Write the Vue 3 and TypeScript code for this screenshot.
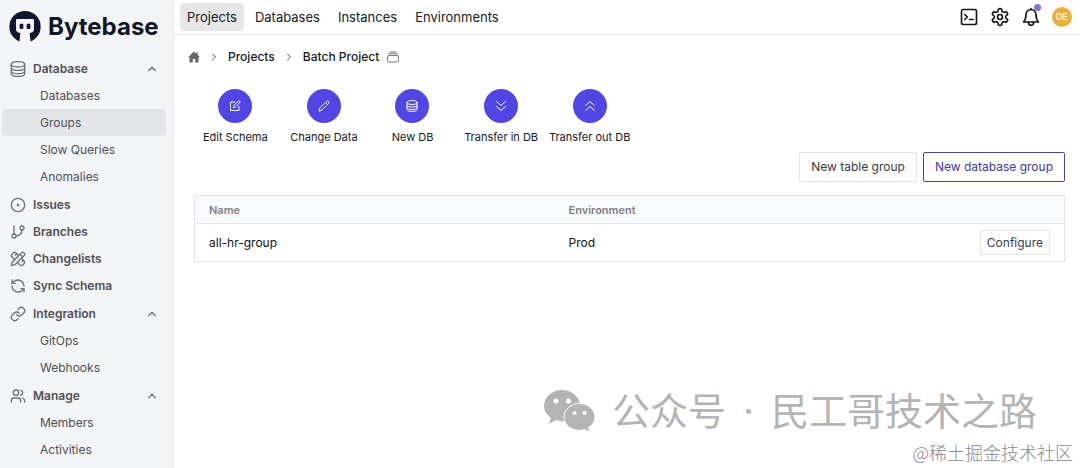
<script setup lang="ts">
type Glyph = { paths: string[]; circles?: number[][]; ellipses?: number[][]; rects?: number[][] }

const glyphs: Record<string, Glyph> = {
  database: {
    ellipses: [[12, 5, 9, 3]],
    paths: ['M3 5v14a9 3 0 0 0 18 0V5', 'M3 12a9 3 0 0 0 18 0'],
  },
  storage: {
    ellipses: [[12, 5, 10, 4]],
    paths: ['M2 5v14a10 4 0 0 0 20 0V5', 'M2 10a10 4 0 0 0 20 0', 'M2 15a10 4 0 0 0 20 0'],
  },
  issues: { paths: [], circles: [[12, 12, 10], [12, 12, 1]] },
  branches: {
    circles: [[18, 6, 3], [6, 18, 3]],
    paths: ['M6 3v12', 'M18 9a9 9 0 0 1-9 9'],
  },
  changelists: {
    paths: [
      'm15 5 4 4',
      'M13 7 8.7 2.7a2.41 2.41 0 0 0-3.4 0L2.7 5.3a2.41 2.41 0 0 0 0 3.4L7 13',
      'm8 6 2-2',
      'm2 22 5.5-1.5L21.17 6.83a2.82 2.82 0 0 0-4-4L3.5 16.5Z',
      'm18 16 2-2',
      'm17 11 4.3 4.3c.94.94.94 2.46 0 3.4l-2.6 2.6c-.94.94-2.46.94-3.4 0L11 17',
    ],
  },
  sync: {
    paths: [
      'M21 12a9 9 0 0 0-9-9 9.75 9.75 0 0 0-6.74 2.74L3 8',
      'M3 3v5h5',
      'M3 12a9 9 0 0 0 9 9 9.75 9.75 0 0 0 6.74-2.74L21 16',
      'M16 16h5v5',
    ],
  },
  link: {
    paths: [
      'M10 13a5 5 0 0 0 7.54.54l3-3a5 5 0 0 0-7.07-7.07l-1.72 1.71',
      'M14 11a5 5 0 0 0-7.54-.54l-3 3a5 5 0 0 0 7.07 7.07l1.71-1.71',
    ],
  },
  users: {
    circles: [[9, 7, 4]],
    paths: ['M16 21v-2a4 4 0 0 0-4-4H6a4 4 0 0 0-4 4v2', 'M22 21v-2a4 4 0 0 0-3-3.87', 'M16 3.13a4 4 0 0 1 0 7.75'],
  },
  edit: {
    paths: ['M11 4H3v17h17v-8', 'M18.4 2.6a2 2 0 0 1 3 3L12.5 14.5 8.5 15.5l1-4Z'],
  },
  pencil: {
    paths: ['M17 3a2.85 2.83 0 1 1 4 4L7.5 20.5 2 22l1.5-5.5Z', 'm15 5 4 4'],
  },
  down: { paths: ['m3 3 9 8 9-8', 'm3 13 9 8 9-8'] },
  up: { paths: ['m3 11 9-8 9 8', 'm3 21 9-8 9 8'] },
  terminal: { rects: [[3, 3, 18, 18]], paths: ['m7 9 3 3-3 3', 'M12.500 15h4.500'] },
  settings: {
    circles: [[12, 12, 3]],
    paths: [
      'M12.22 2h-.44a2 2 0 0 0-2 2v.18a2 2 0 0 1-1 1.730l-.43.25a2 2 0 0 1-2 0l-.15-.08a2 2 0 0 0-2.730.73l-.22.38a2 2 0 0 0 .73 2.730l.15.1a2 2 0 0 1 1 1.720v.51a2 2 0 0 1-1 1.740l-.15.09a2 2 0 0 0-.73 2.730l.22.38a2 2 0 0 0 2.730.73l.15-.08a2 2 0 0 1 2 0l.43.25a2 2 0 0 1 1 1.730V20a2 2 0 0 0 2 2h.44a2 2 0 0 0 2-2v-.18a2 2 0 0 1 1-1.730l.43-.25a2 2 0 0 1 2 0l.15.08a2 2 0 0 0 2.730-.73l.22-.39a2 2 0 0 0-.73-2.730l-.15-.08a2 2 0 0 1-1-1.740v-.5a2 2 0 0 1 1-1.740l.15-.09a2 2 0 0 0 .73-2.730l-.22-.38a2 2 0 0 0-2.730-.73l-.15.08a2 2 0 0 1-2 0l-.43-.25a2 2 0 0 1-1-1.730V4a2 2 0 0 0-2-2z',
    ],
  },
  bell: {
    paths: ['M6 9a6 6 0 0 1 12 0c0 5 1 7 3 9H3c2-2 3-4 3-9', 'M9 18v1a3 3 0 0 0 6 0v-1', 'M12 3V2'],
  },
}

interface NavItem {
  label: string
  icon: string
  children?: string[]
}

const sections: NavItem[][] = [
  [{ label: 'Database', icon: 'storage', children: ['Databases', 'Groups', 'Slow Queries', 'Anomalies'] }],
  [
    { label: 'Issues', icon: 'issues' },
    { label: 'Branches', icon: 'branches' },
    { label: 'Changelists', icon: 'changelists' },
    { label: 'Sync Schema', icon: 'sync' },
  ],
  [{ label: 'Integration', icon: 'link', children: ['GitOps', 'Webhooks'] }],
  [{ label: 'Manage', icon: 'users', children: ['Members', 'Activities'] }],
]
const activeChild = 'Groups'

const tabs = ['Projects', 'Databases', 'Instances', 'Environments']
const activeTab = 'Projects'

const tools = [
  { label: 'SQL Editor', icon: 'terminal' },
  { label: 'Settings', icon: 'settings' },
  { label: 'Notifications', icon: 'bell' },
]

const actions = [
  { label: 'Edit Schema', icon: 'edit' },
  { label: 'Change Data', icon: 'pencil' },
  { label: 'New DB', icon: 'storage' },
  { label: 'Transfer in DB', icon: 'down' },
  { label: 'Transfer out DB', icon: 'up' },
]

const groups = [{ name: 'all-hr-group', environment: 'Prod' }]
</script>

<template>
  <div class="layout">
    <aside class="sidebar">
      <a class="logo" href="#">
        <svg class="logo-mark" viewBox="0 0 96 96" aria-hidden="true">
          <circle cx="48" cy="47" r="47" fill="#10172a" />
          <path
            d="M21 27q0-3 3-3h48q3 0 3 3v27q0 9-9 11l-4 1 3 30H31l3-30-4-1q-9-2-9-11Z"
            fill="#f3f4f6"
          />
          <rect x="32" y="38" width="11" height="16" rx="3" fill="#10172a" />
          <rect x="53" y="38" width="11" height="16" rx="3" fill="#10172a" />
        </svg>
        <span>Bytebase</span>
      </a>
      <nav class="menu" aria-label="Project">
        <div v-for="(section, i) in sections" :key="i">
          <template v-for="item in section" :key="item.label">
            <component
              :is="item.children ? 'button' : 'a'"
              class="row"
              :href="item.children ? undefined : '#'"
              :type="item.children ? 'button' : undefined"
            >
              <svg class="icon row-icon" viewBox="0 0 24 24" aria-hidden="true">
                <ellipse v-for="(e, k) in glyphs[item.icon].ellipses" :key="k" :cx="e[0]" :cy="e[1]" :rx="e[2]" :ry="e[3]" />
                <circle v-for="(c, k) in glyphs[item.icon].circles" :key="k" :cx="c[0]" :cy="c[1]" :r="c[2]" />
                <path v-for="d in glyphs[item.icon].paths" :key="d" :d="d" />
              </svg>
              <span>{{ item.label }}</span>
              <svg v-if="item.children" class="icon caret" viewBox="0 0 24 24" aria-hidden="true">
                <path d="m18 15-6-6-6 6" />
              </svg>
            </component>
            <a
              v-for="child in item.children"
              :key="child"
              href="#"
              class="row child"
              :class="{ active: child === activeChild }"
              >{{ child }}</a
            >
          </template>
        </div>
      </nav>
    </aside>

    <div class="content">
      <header class="topbar">
        <nav class="tabs" aria-label="Main">
          <a v-for="tab in tabs" :key="tab" href="#" class="tab" :class="{ active: tab === activeTab }">{{ tab }}</a>
        </nav>
        <div class="tools">
          <button v-for="tool in tools" :key="tool.label" type="button" class="tool" :aria-label="tool.label">
            <svg class="icon tool-icon" viewBox="0 0 24 24" aria-hidden="true">
              <rect v-for="(r, k) in glyphs[tool.icon].rects" :key="k" :x="r[0]" :y="r[1]" :width="r[2]" :height="r[3]" rx="2" />
              <circle v-for="(c, k) in glyphs[tool.icon].circles" :key="k" :cx="c[0]" :cy="c[1]" :r="c[2]" />
              <path v-for="d in glyphs[tool.icon].paths" :key="d" :d="d" />
            </svg>
            <span v-if="tool.icon === 'bell'" class="dot"></span>
          </button>
          <button type="button" class="avatar">DE</button>
        </div>
      </header>

      <nav class="crumbs" aria-label="Breadcrumb">
        <a href="#" aria-label="Home">
          <svg class="home" viewBox="0 0 24 24" aria-hidden="true">
            <path d="M12 1 0 12.500h3V23h6.500v-7h5v7H21V12.500h3L19.500 8.200V3h-3v2.300Z" />
          </svg>
        </a>
        <svg class="icon crumb-sep" viewBox="0 0 24 24" aria-hidden="true"><path d="m9 18 6-6-6-6" /></svg>
        <a href="#">Projects</a>
        <svg class="icon crumb-sep" viewBox="0 0 24 24" aria-hidden="true"><path d="m9 18 6-6-6-6" /></svg>
        <a href="#">Batch Project</a>
        <svg class="icon batch" viewBox="0 0 24 24" aria-hidden="true">
          <rect x="1" y="9" width="22" height="13" rx="3" />
          <path d="M3 5.500h18M6 2h12" />
        </svg>
      </nav>

      <main class="main">
        <div class="actions">
          <button v-for="action in actions" :key="action.label" type="button" class="action">
            <span class="disc">
              <svg class="icon disc-icon" viewBox="0 0 24 24" aria-hidden="true">
                <ellipse v-for="(e, k) in glyphs[action.icon].ellipses" :key="k" :cx="e[0]" :cy="e[1]" :rx="e[2]" :ry="e[3]" />
                <path v-for="d in glyphs[action.icon].paths" :key="d" :d="d" />
              </svg>
            </span>
            <span>{{ action.label }}</span>
          </button>
        </div>

        <div class="buttons">
          <button type="button" class="btn">New table group</button>
          <button type="button" class="btn primary">New database group</button>
        </div>

        <table class="grid">
          <thead>
            <tr>
              <th class="col-name">Name</th>
              <th>Environment</th>
              <th aria-label="Actions"></th>
            </tr>
          </thead>
          <tbody>
            <tr v-for="group in groups" :key="group.name">
              <td>{{ group.name }}</td>
              <td>{{ group.environment }}</td>
              <td class="cell-action"><button type="button" class="btn small">Configure</button></td>
            </tr>
          </tbody>
        </table>
      </main>
    </div>

    <div class="mark">
      <svg class="wechat" viewBox="0 0 51 42" aria-hidden="true">
        <path
          d="M18 0C8 0 0 7 0 16c0 5 3 9 7 12l-2 6 7-4 6 1.500C28 31 36 25 36 16S28 0 18 0Z"
        />
        <path
          class="front"
          d="M35.500 13.500C27 13.500 20 19.500 20 27s7 13.500 15.500 13.500l5-1 5.500 3-1.500-5C48.500 35 51 31.500 51 27c0-7.500-7-13.500-15.500-13.500Z"
        />
        <g class="eyes">
          <circle cx="12" cy="11" r="2.500" />
          <circle cx="24.500" cy="11" r="2.500" />
          <circle cx="30.500" cy="23" r="2" />
          <circle cx="40.500" cy="23" r="2" />
        </g>
      </svg>
      <span>公众号</span>
      <span>·</span>
      <span>民工哥技术之路</span>
    </div>
    <div class="credit">@稀土掘金技术社区</div>
  </div>
</template>

<style>
body {
  margin: 0;
  background: #fff;
}
</style>

<style scoped>
.layout {
  position: relative;
  display: flex;
  min-height: 100vh;
  overflow: hidden;
  box-sizing: border-box;
  font-family: Inter, 'Noto Sans CJK SC', sans-serif;
  font-size: 12px;
  line-height: 16px;
  color: #18181b;
}
a {
  color: inherit;
  text-decoration: none;
}
button {
  margin: 0;
  padding: 0;
  border: 0;
  background: none;
  color: inherit;
  font: inherit;
  cursor: pointer;
}
.icon {
  flex: none;
  fill: none;
  stroke: currentColor;
  stroke-width: 2;
  stroke-linecap: round;
  stroke-linejoin: round;
}

.sidebar {
  flex: none;
  box-sizing: border-box;
  width: 174px;
  border-right: 1px solid #e8eaed;
  background: #f3f4f6;
  color: #505056;
}
.logo {
  display: flex;
  align-items: center;
  gap: 7px;
  height: 55px;
  box-sizing: border-box;
  padding: 0 0 2px 9px;
  color: #10172a;
  font-size: 24px;
  font-weight: 700;
  line-height: 32px;
}
.logo-mark {
  flex: none;
  width: 32px;
  height: 32px;
}
.menu {
  display: flex;
  flex-direction: column;
  gap: 1px;
  padding: 0 7px 0 2px;
}
.row {
  display: flex;
  align-items: center;
  gap: 7px;
  width: 100%;
  height: 27px;
  box-sizing: border-box;
  padding: 0 7px 0 8px;
  border-radius: 4px;
  font-weight: 600;
  text-align: left;
}
.child {
  padding-left: 38px;
  font-weight: 400;
}
.child.active {
  background: #e4e5e8;
}
.row-icon {
  width: 16px;
  height: 16px;
  color: #707078;
}
.caret {
  width: 14px;
  height: 14px;
  margin-left: auto;
  color: #707078;
}

.content {
  flex: 1;
  min-width: 0;
}
.topbar {
  display: flex;
  align-items: center;
  justify-content: space-between;
  height: 35px;
  box-sizing: border-box;
  padding: 0 8px 0 6px;
  border-bottom: 1px solid #e5e7eb;
}
.tabs {
  display: flex;
  gap: 4px;
}
.tab {
  padding: 4px 7px;
  border-radius: 4px;
  font-size: 13px;
  line-height: 20px;
}
.tab.active {
  background: #e5e6e8;
}
.tools {
  display: flex;
  align-items: center;
  gap: 11px;
}
.tool {
  position: relative;
  display: flex;
}
.tool-icon {
  width: 20px;
  height: 20px;
}
.dot {
  position: absolute;
  top: -3px;
  right: 0;
  width: 7px;
  height: 7px;
  border-radius: 50%;
  background: #8272dc;
}
.avatar {
  width: 20px;
  height: 20px;
  border-radius: 50%;
  background: #e8b13c;
  color: #fff6dc;
  font-size: 9px;
  line-height: 20px;
  font-weight: 600;
}

.crumbs {
  display: flex;
  align-items: center;
  gap: 8px;
  padding: 14px 14px 0;
  font-weight: 500;
}
.crumbs a {
  display: flex;
}
.home {
  width: 12px;
  height: 12px;
  fill: #66666a;
}
.crumb-sep {
  width: 12px;
  height: 12px;
  color: #55555a;
}
.batch {
  width: 12px;
  height: 12px;
  color: #77777c;
}

.main {
  padding: 24px 15px 0 20px;
}
.actions {
  display: grid;
  grid-template-columns: repeat(5, 1fr);
  max-width: 443px;
  margin-left: -3px;
}
.action {
  display: flex;
  flex-direction: column;
  align-items: center;
  gap: 6px;
  font-size: 11px;
  white-space: nowrap;
}
.disc {
  display: flex;
  align-items: center;
  justify-content: center;
  width: 34px;
  height: 34px;
  border-radius: 50%;
  background: #4f46e5;
  color: #fff;
}
.disc-icon {
  width: 12px;
  height: 12px;
}
.buttons {
  display: flex;
  justify-content: flex-end;
  gap: 6px;
  margin: 7px 0 13px;
}
.btn {
  box-sizing: border-box;
  height: 30px;
  padding: 0 11px;
  border: 1px solid #e4e4e7;
  border-radius: 2px;
  background: #fff;
  color: #3a3a40;
}
.btn.primary {
  border-color: #4a43a0;
  color: #40379f;
}
.btn.small {
  height: 25px;
  padding: 0 6px;
}
.grid {
  width: 100%;
  border: 1px solid #e3e5e8;
  border-collapse: collapse;
  table-layout: fixed;
}
.grid th,
.grid td {
  box-sizing: border-box;
  padding: 0 14px;
  text-align: left;
}
.grid th {
  height: 28px;
  border-bottom: 1px solid #e3e5e8;
  background: #f9fafb;
  color: #808086;
  font-size: 11px;
  font-weight: 600;
}
.grid td {
  height: 38px;
  color: #111;
}
.col-name {
  width: 360px;
}
.grid .cell-action {
  text-align: right;
}

.mark {
  position: absolute;
  right: 43px;
  bottom: 30px;
  display: flex;
  align-items: center;
  gap: 17px;
  color: #b4b4b4;
  font-size: 38px;
  line-height: 54px;
  white-space: nowrap;
  pointer-events: none;
}
.wechat {
  width: 51px;
  height: 42px;
  fill: #b4b4b4;
}
.front {
  stroke: #fff;
  stroke-width: 1;
}
.eyes {
  fill: #fff;
}
.credit {
  position: absolute;
  right: 7px;
  bottom: 4px;
  color: #8a8a8e;
  font-family: 'Noto Sans CJK SC', sans-serif;
  font-size: 18px;
  font-weight: 300;
  line-height: 24px;
  white-space: nowrap;
  pointer-events: none;
}
</style>
